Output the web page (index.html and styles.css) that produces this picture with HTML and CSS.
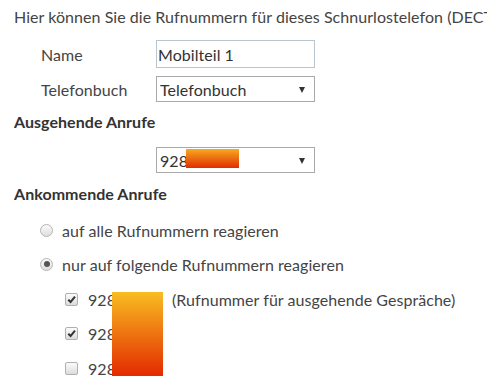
FILE: index.html
```html
<!DOCTYPE html>
<html lang="de">
<head>
<meta charset="utf-8">
<link rel="stylesheet" href="styles.css">
</head>
<body>
<div class="page">
  <p class="intro">Hier können Sie die Rufnummern für dieses Schnurlostelefon (DECT) festlegen.</p>
  <div class="form">
    <div class="row row-name">
      <label class="lbl">Name</label>
      <div class="input">Mobilteil 1</div>
    </div>
    <div class="row row-book">
      <label class="lbl">Telefonbuch</label>
      <div class="select"><span>Telefonbuch</span><span class="arrow"></span></div>
    </div>
  </div>
  <h3 class="head head-out">Ausgehende Anrufe</h3>
  <div class="row row-out">
    <div class="select"><span class="num">928<span class="mask mask-small"></span></span><span class="arrow"></span></div>
  </div>
  <h3 class="head head-in">Ankommende Anrufe</h3>
  <div class="radios">
    <div class="opt"><span class="radio"></span><span>auf alle Rufnummern reagieren</span></div>
    <div class="opt"><span class="radio on"></span><span>nur auf folgende Rufnummern reagieren</span></div>
  </div>
  <div class="checks">
    <span class="mask mask-big"></span>
    <div class="chk-row"><span class="cb on"><svg viewBox="0 0 12 12"><path d="M2.5 6.2 L5 8.8 L9.8 2.8" /></svg></span><span class="num">928</span><span class="note">(Rufnummer für ausgehende Gespräche)</span></div>
    <div class="chk-row"><span class="cb on"><svg viewBox="0 0 12 12"><path d="M2.5 6.2 L5 8.8 L9.8 2.8" /></svg></span><span class="num">928</span></div>
    <div class="chk-row"><span class="cb"></span><span class="num">928</span></div>
  </div>
</div>
</body>
</html>
```
FILE: styles.css
```css
html, body {
  margin: 0;
  padding: 0;
  background: #fff;
}
body {
  font-family: "Lato", "Open Sans", sans-serif;
  font-size: 16px;
  letter-spacing: 0.05px;
  color: #444;
  overflow: hidden;
}
.page {
  padding-left: 14px;
  width: 700px;
}
.intro {
  margin: 0;
  padding-top: 6px;
  height: 22px;
  line-height: 22px;
  white-space: nowrap;
}
.form {
  padding-top: 12px;
}
.row {
  display: flex;
  align-items: center;
}
.lbl {
  width: 115px;
  padding-left: 27px;
}
.row-name {
  height: 28px;
}
.row-book {
  margin-top: 8px;
  height: 26px;
}
.input, .select {
  box-sizing: border-box;
  width: 159px;
  border: 1px solid #a9a9a9;
  padding-left: 2px;
  color: #333;
  display: flex;
  align-items: center;
  position: relative;
}
.input {
  height: 28px;
  border-color: #b9c6cf;
  padding-left: 1px;
}
.select {
  height: 26px;
  padding-left: 3px;
}
.arrow {
  position: absolute;
  right: 9px;
  top: 10px;
  width: 0;
  height: 0;
  border-left: 3.5px solid transparent;
  border-right: 3.5px solid transparent;
  border-top: 6px solid #333;
}
.head {
  margin: 0;
  font-size: 16px;
  font-weight: 700;
  color: #333;
  line-height: 20px;
}
.head-out {
  margin-top: 10px;
}
.row-out {
  margin-top: 15px;
  padding-left: 142px;
}
.num {
  position: relative;
}
.mask {
  position: absolute;
  display: block;
}
.mask-small {
  left: 26px;
  top: -2px;
  width: 53px;
  height: 19px;
  background: linear-gradient(#f6aa20, #e22c00);
}
.head-in {
  margin-top: 11px;
}
.radios {
  margin-top: 9px;
  padding-left: 26px;
}
.opt {
  display: flex;
  align-items: center;
  height: 34px;
}
.radio {
  box-sizing: border-box;
  width: 13px;
  height: 13px;
  border-radius: 50%;
  border: 1px solid #b5b5b5;
  background: linear-gradient(#fafafa, #dedede);
  margin-right: 9px;
  position: relative;
}
.radio.on::after {
  content: "";
  position: absolute;
  left: 2.5px;
  top: 2.5px;
  width: 6px;
  height: 6px;
  border-radius: 50%;
  background: #555;
}
.checks {
  position: relative;
  margin-top: 1px;
  padding-left: 51px;
}
.chk-row {
  display: flex;
  align-items: center;
  height: 34.5px;
}
.cb {
  box-sizing: border-box;
  width: 13px;
  height: 13px;
  border: 1px solid #b0b0b0;
  border-radius: 2px;
  background: linear-gradient(#fbfbfb, #dcdcdc);
  margin-right: 10px;
  display: flex;
}
.cb svg {
  width: 11px;
  height: 11px;
}
.cb path {
  fill: none;
  stroke: #333;
  stroke-width: 2.2;
}
.note {
  margin-left: 56px;
}
.mask-big {
  left: 98px;
  top: 10px;
  width: 51px;
  height: 84px;
  z-index: 2;
  background: linear-gradient(#f8bd22, #e32a00);
}
```
